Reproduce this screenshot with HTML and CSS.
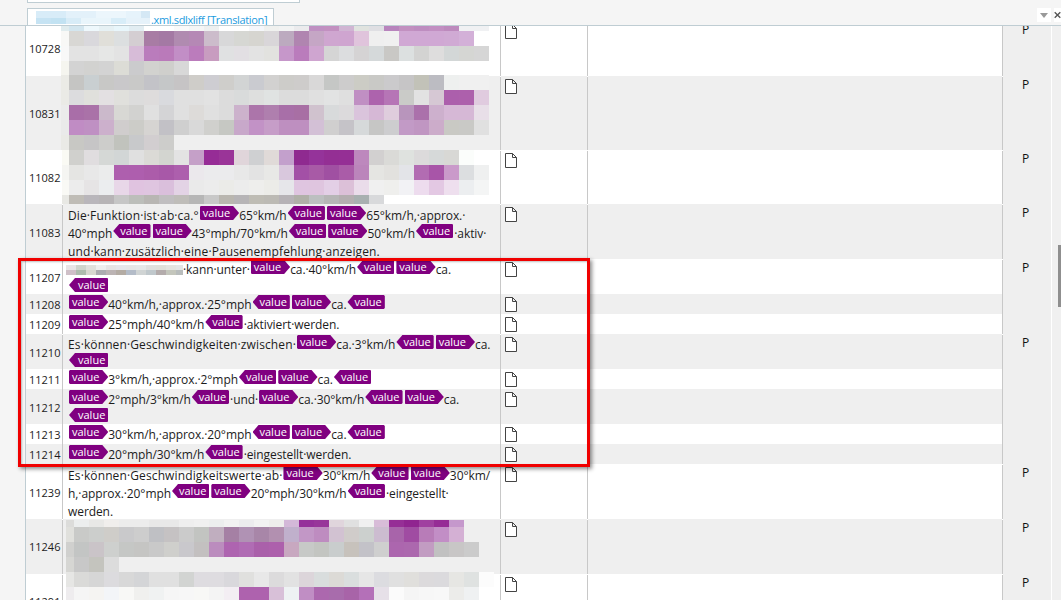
FILE: index.html
```html
<!DOCTYPE html>
<html lang="en">
  <head>
    <meta charset="UTF-8" />
    <title>Translation editor</title>
    <link rel="stylesheet" href="styles.css">
  </head>

  <body>
    <header class="tabbar">
      <div class="tab-top"></div>
      <div class="tab">
        <div class="mosaic tab-mosaic" data-mosaic="tab"></div>
        <span class="tab-name">.xml.sdlxliff [Translation]</span>
      </div>
      <div class="tab-tools">
        <span class="tool"><i class="arrow"></i></span>
        <span class="tool close">
          <svg width="10" height="10" viewBox="0 0 10 10"><path d="M1 1l8 8M9 1l-8 8" stroke="#555" stroke-width="2" fill="none"/></svg>
        </span>
      </div>
    </header>

    <main class="grid">
      <div class="rows">
        <div class="row white group first">
          <div class="num">10728</div>
          <div class="text"><div class="mosaic top" data-mosaic="a"></div></div>
          <div class="doc"><svg class="page" width="12" height="15" viewBox="0 0 12 15"><path d="M.5.5h7l4 4v10h-11zM7.5.5v4h4" fill="#fff" stroke="#444"/></svg></div>
          <div class="notes"></div>
          <div class="status">P</div>
        </div>

        <div class="row grey group tall">
          <div class="num">10831</div>
          <div class="text"><div class="mosaic top lift" data-mosaic="b"></div></div>
          <div class="doc"><svg class="page" width="12" height="15" viewBox="0 0 12 15"><path d="M.5.5h7l4 4v10h-11zM7.5.5v4h4" fill="#fff" stroke="#444"/></svg></div>
          <div class="notes"></div>
          <div class="status">P</div>
        </div>

        <div class="row white group r54">
          <div class="num">11082</div>
          <div class="text clip"><div class="mosaic top flush" data-mosaic="c"></div></div>
          <div class="doc"><svg class="page" width="12" height="15" viewBox="0 0 12 15"><path d="M.5.5h7l4 4v10h-11zM7.5.5v4h4" fill="#fff" stroke="#444"/></svg></div>
          <div class="notes"></div>
          <div class="status">P</div>
        </div>

        <div class="row grey group r3">
          <div class="num">11083</div>
          <div class="text">
            <div class="line"><span class="wide">Die·Funktion·ist·ab·ca.°</span><b class="s">value</b>65°km/h<b class="e">value</b><b class="s">value</b>65°km/h,·approx.·</div>
            <div class="line">40°mph<b class="e">value</b><b class="s">value</b>43°mph/70°km/h<b class="e">value</b><b class="s">value</b>50°km/h<b class="e">value</b>·aktiv·</div>
            <div class="line"><span class="wide">und·kann·zusätzlich·eine·Pausenempfehlung·anzeigen.</span></div>
          </div>
          <div class="doc"><svg class="page" width="12" height="15" viewBox="0 0 12 15"><path d="M.5.5h7l4 4v10h-11zM7.5.5v4h4" fill="#fff" stroke="#444"/></svg></div>
          <div class="notes"></div>
          <div class="status">P</div>
        </div>

        <div class="row white group r2">
          <div class="num">11207</div>
          <div class="text">
            <div class="line"><div class="mosaic small" data-mosaic="d"></div>·kann·unter·<b class="s">value</b>ca.·40°km/h<b class="e">value</b><b class="s">value</b>ca.</div>
            <div class="line"><b class="e solo">value</b></div>
          </div>
          <div class="doc"><svg class="page" width="12" height="15" viewBox="0 0 12 15"><path d="M.5.5h7l4 4v10h-11zM7.5.5v4h4" fill="#fff" stroke="#444"/></svg></div>
          <div class="notes"></div>
          <div class="status">P</div>
        </div>

        <div class="row grey r1">
          <div class="num">11208</div>
          <div class="text">
            <div class="line"><b class="s">value</b>40°km/h,·approx.·25°mph<b class="e">value</b><b class="s">value</b>ca.<b class="e">value</b></div>
          </div>
          <div class="doc"><svg class="page" width="12" height="15" viewBox="0 0 12 15"><path d="M.5.5h7l4 4v10h-11zM7.5.5v4h4" fill="#fff" stroke="#444"/></svg></div>
          <div class="notes"></div>
          <div class="status"></div>
        </div>

        <div class="row white r1">
          <div class="num">11209</div>
          <div class="text">
            <div class="line"><b class="s">value</b>25°mph/40°km/h<b class="e">value</b>·aktiviert·werden.</div>
          </div>
          <div class="doc"><svg class="page" width="12" height="15" viewBox="0 0 12 15"><path d="M.5.5h7l4 4v10h-11zM7.5.5v4h4" fill="#fff" stroke="#444"/></svg></div>
          <div class="notes"></div>
          <div class="status"></div>
        </div>

        <div class="row grey group r2">
          <div class="num">11210</div>
          <div class="text">
            <div class="line"><span class="wide">Es·können·Geschwindigkeiten·zwischen·</span><b class="s">value</b>ca.·3°km/h<b class="e">value</b><b class="s">value</b>ca.</div>
            <div class="line"><b class="e solo">value</b></div>
          </div>
          <div class="doc"><svg class="page" width="12" height="15" viewBox="0 0 12 15"><path d="M.5.5h7l4 4v10h-11zM7.5.5v4h4" fill="#fff" stroke="#444"/></svg></div>
          <div class="notes"></div>
          <div class="status">P</div>
        </div>

        <div class="row white r1">
          <div class="num">11211</div>
          <div class="text">
            <div class="line"><b class="s">value</b>3°km/h,·approx.·2°mph<b class="e">value</b><b class="s">value</b>ca.<b class="e">value</b></div>
          </div>
          <div class="doc"><svg class="page" width="12" height="15" viewBox="0 0 12 15"><path d="M.5.5h7l4 4v10h-11zM7.5.5v4h4" fill="#fff" stroke="#444"/></svg></div>
          <div class="notes"></div>
          <div class="status"></div>
        </div>

        <div class="row grey r2">
          <div class="num">11212</div>
          <div class="text">
            <div class="line"><b class="s">value</b>2°mph/3°km/h<b class="e">value</b>·und·<b class="s">value</b>ca.·30°km/h<b class="e">value</b><b class="s">value</b>ca.</div>
            <div class="line"><b class="e solo">value</b></div>
          </div>
          <div class="doc"><svg class="page" width="12" height="15" viewBox="0 0 12 15"><path d="M.5.5h7l4 4v10h-11zM7.5.5v4h4" fill="#fff" stroke="#444"/></svg></div>
          <div class="notes"></div>
          <div class="status"></div>
        </div>

        <div class="row white r1">
          <div class="num">11213</div>
          <div class="text">
            <div class="line"><b class="s">value</b>30°km/h,·approx.·20°mph<b class="e">value</b><b class="s">value</b>ca.<b class="e">value</b></div>
          </div>
          <div class="doc"><svg class="page" width="12" height="15" viewBox="0 0 12 15"><path d="M.5.5h7l4 4v10h-11zM7.5.5v4h4" fill="#fff" stroke="#444"/></svg></div>
          <div class="notes"></div>
          <div class="status"></div>
        </div>

        <div class="row grey r1">
          <div class="num">11214</div>
          <div class="text">
            <div class="line"><b class="s">value</b>20°mph/30°km/h<b class="e">value</b>·eingestellt·werden.</div>
          </div>
          <div class="doc"><svg class="page" width="12" height="15" viewBox="0 0 12 15"><path d="M.5.5h7l4 4v10h-11zM7.5.5v4h4" fill="#fff" stroke="#444"/></svg></div>
          <div class="notes"></div>
          <div class="status"></div>
        </div>

        <div class="row white group r3">
          <div class="num">11239</div>
          <div class="text">
            <div class="line"><span class="wide">Es·können·Geschwindigkeitswerte·ab·</span><b class="s">value</b>30°km/h<b class="e">value</b><b class="s">value</b>30°km/</div>
            <div class="line">h,·approx.·20°mph<b class="e">value</b><b class="s">value</b>20°mph/30°km/h<b class="e">value</b>·eingestellt·</div>
            <div class="line">werden.</div>
          </div>
          <div class="doc"><svg class="page" width="12" height="15" viewBox="0 0 12 15"><path d="M.5.5h7l4 4v10h-11zM7.5.5v4h4" fill="#fff" stroke="#444"/></svg></div>
          <div class="notes"></div>
          <div class="status">P</div>
        </div>

        <div class="row grey group r3">
          <div class="num">11246</div>
          <div class="text"><div class="mosaic bottom" data-mosaic="e"></div></div>
          <div class="doc"><svg class="page" width="12" height="15" viewBox="0 0 12 15"><path d="M.5.5h7l4 4v10h-11zM7.5.5v4h4" fill="#fff" stroke="#444"/></svg></div>
          <div class="notes"></div>
          <div class="status">P</div>
        </div>

        <div class="row white group r3">
          <div class="num">11291</div>
          <div class="text"><div class="mosaic bottom lift2" data-mosaic="f"></div></div>
          <div class="doc"><svg class="page" width="12" height="15" viewBox="0 0 12 15"><path d="M.5.5h7l4 4v10h-11zM7.5.5v4h4" fill="#fff" stroke="#444"/></svg></div>
          <div class="notes"></div>
          <div class="status">P</div>
        </div>
      </div>

      <div class="scrollbar"><div class="thumb"></div></div>
    </main>

    <div class="callout"></div>

    <script src="mosaic.js"></script>
  </body>
</html>
```

FILE: styles.css
```css
html,
body {
  margin: 0;
  padding: 0;
  height: 600px;
  overflow: hidden;
  background-color: #f5f5f5;
  font-family: "Open Sans", "Noto Sans", sans-serif;
  font-size: 12px;
  color: #1c1c1c;
}

/* tab strip */
.tabbar {
  position: relative;
  height: 25px;
  background-color: #f5f5f5;
  border-bottom: 1px solid #bfcdd3;
  overflow: hidden;
}

.tab-top {
  width: 273px;
  height: 3px;
  margin-left: 27px;
  border: 1px solid #bfcdd3;
  border-top: none;
  box-sizing: border-box;
  background-color: #fff;
}

.tab {
  display: flex;
  width: 247px;
  height: 22px;
  margin: 5px 0 0 27px;
  padding: 1px 0 0 8px;
  box-sizing: border-box;
  border: 1px solid #bfcdd3;
  background-color: #fff;
}

.tab-name {
  margin: 2px 0 0 1px;
  font-size: 11px;
  letter-spacing: -0.35px;
  line-height: 15px;
  white-space: nowrap;
  color: #1d9ce0;
}

.tab-tools {
  position: absolute;
  top: 8px;
  right: 0;
  display: flex;
  gap: 3px;
}

.tool {
  display: flex;
  align-items: center;
  justify-content: center;
  width: 14px;
  height: 14px;
  background-color: #fff;
}

.tool.close {
  width: 7px;
  justify-content: flex-start;
  overflow: hidden;
}

.arrow {
  width: 0;
  height: 0;
  border: 4px solid transparent;
  border-top: 5px solid #999;
  border-bottom: none;
}

/* main table */
.grid {
  display: flex;
  height: 574px;
  margin-left: 25px;
  border-left: 1px solid #bfcdd3;
  overflow: hidden;
}

.rows {
  width: 1025px;
  margin-top: -5px;
}

.row {
  display: grid;
  grid-template-columns: 36px 438px 87px 415px 49px;
}

.white {
  background-color: #fff;
}

.grey {
  background-color: #efefef;
}

.r1 { height: 20px; }
.r2 { height: 35px; }
.r3 { height: 55px; }
.r54 { height: 54px; }
.tall { height: 74px; }
.first { height: 55px; }

.num {
  display: flex;
  align-items: center;
  padding-left: 3px;
  font-size: 11px;
}

.text,
.doc,
.notes,
.status {
  background: linear-gradient(#c8c8c8, #c8c8c8) 0 0 / 1px 100% no-repeat;
}

.group .text,
.group .doc,
.group .notes,
.group .status {
  background:
    linear-gradient(#c8c8c8, #c8c8c8) 0 1px / 1px 100% no-repeat,
    linear-gradient(#fff, #fff) 0 0 / 1px 1px no-repeat;
}

.text {
  position: relative;
  padding: 1px 0 0 6px;
}

.clip {
  overflow: hidden;
}

.line {
  display: flex;
  height: 18px;
  line-height: 20px;
  letter-spacing: -0.08px;
  white-space: nowrap;
}

.r3 .line:first-child {
  margin-top: 1px;
}

.wide {
  letter-spacing: 0.12px;
}

.doc {
  padding: 3px 0 0 5px;
}

.page {
  display: block;
}

.status,
.group .status,
.row.white .status {
  padding-top: 2px;
  padding-left: 20px;
  line-height: 14px;
  font-weight: 500;
  background-color: #efefef;
  color: #111;
}

/* placeholders */
.s,
.e {
  flex: none;
  height: 14px;
  font-size: 11px;
  font-weight: normal;
  line-height: 13px;
  letter-spacing: 0;
  color: #fff;
  background-color: #800080;
}

.s {
  margin: 0 0 0 1px;
  padding: 0 9px 0 3px;
  clip-path: polygon(1px 0, calc(100% - 6px) 0, 100% 50%, calc(100% - 6px) 100%, 1px 100%, 0 calc(100% - 1px), 0 1px);
}

.e {
  margin: 0 1px;
  padding: 0 3px 0 7px;
  clip-path: polygon(6px 0, calc(100% - 1px) 0, 100% 1px, 100% calc(100% - 1px), calc(100% - 1px) 100%, 6px 100%, 0 50%);
}

.solo {
  padding-left: 9px;
}

/* blurred source text */
.mosaic {
  position: relative;
}

.top {
  margin-left: -7px;
}

.lift {
  margin-top: -2px;
}

.flush {
  margin-top: -1px;
}

.bottom {
  margin-left: -2px;
}

.lift2 {
  margin-top: -3px;
}

.small {
  width: 117px;
  margin: 5px 0 0 -2px;
  overflow: hidden;
}

.tab-mosaic {
  flex: none;
  width: 114px;
  margin-top: 1px;
  overflow: hidden;
}

.m-row {
  display: flex;
}

.m-cell {
  flex: none;
  width: 15px;
}

.m-lead {
  width: 8px;
}

.small .m-cell {
  width: 10px;
}

/* scrollbar */
.scrollbar {
  flex: 1;
  position: relative;
  background-color: #f0f0f0;
  border-left: 1px solid #fff;
}

.thumb {
  position: absolute;
  top: 219px;
  right: 0;
  width: 3px;
  height: 62px;
  background-color: #8f8f8f;
}

/* red review box drawn over the table */
.callout {
  position: absolute;
  top: 258px;
  left: 18px;
  width: 566px;
  height: 203px;
  border: 3px solid #f00000;
  box-shadow: 2px 2px 4px rgba(0, 0, 0, 0.45), inset 1px 1px 2px rgba(0, 0, 0, 0.25);
}
```

FILE: mosaic.js
```js
// colours of the pixelated blocks, each row is [height, lead cell, cells...]
const mosaics = {
  tab: [
    [7, null, "#d8ecf8", "#d8ecf8", "#e3f1fa", "#e3f1fa", "#ecf6fc", "#ecf6fc", "#e6f3fb", "#d5e8f5"],
    [6, null, "#c6e3f3", "#c2e2f2", "#d8ecf7", "#e9f5fb", "#e9f5fb", "#d8edf8", "#e6f2fa", "#e6f2fa"],
  ],
  a: [
    [9, "#e0ecee", "#d3e6ef", "#eef8fc", "#e6f1f4", "#e8f6fb", "#e2edf2", "#fff", "#fff", "#fafafa", "#f5f6f6", "#eef0f0", "#fff", "#fff", "#f5f7fb", "#f0f1ef", "#f2f3f3", "#ebebed", "#bf90c2", "#c290c0", "#d0b5d3", "#e0e3df", "#dfdfe3", "#b884bd", "#c290c0", "#be8dc0", "#c28fc2", "#bd8abd", "#f0f1f3", "#f0f1f3"],
    [15, "#f8f8f6", "#d8d7d4", "#d9d8dc", "#e0dfd9", "#dcdfe0", "#d4ced2", "#a87ca4", "#a479a4", "#b08bb0", "#b588b5", "#ccbccb", "#d8d8d9", "#d6d7d3", "#d6d5d0", "#d9d6d9", "#bcaabf", "#b085b0", "#c5a6c5", "#cfa6d0", "#cfa5d0", "#e0c4dc", "#efefef", "#f0f0f0", "#d0a8d4", "#d0a8d4", "#d0a8d4", "#d0aad4", "#d3b0d8", "#fff"],
    [15, "#f8f8f8", "#e3e3e3", "#e3e3e3", "#e6e7e6", "#e3e3e3", "#d7bcd8", "#ba7cbc", "#ba7aba", "#c28ec6", "#bb7cbc", "#c89cc0", "#e0e1e2", "#e2dfe3", "#e3e3e3", "#e2e2df", "#c697ca", "#ba7cbc", "#cfa5d0", "#d5d5d5", "#dcdddf", "#d5d3d4", "#d5d9da", "#c9c8c5", "#dce0e0", "#d3d3d2", "#dedddd", "#d3d7d7", "#d5d6d3", "#d6d6d6"],
    [15, "#f5f5ef", "#d3d3d3", "#d2d2d0", "#d3d3d3", "#dcdcd6", "#cbcbcd", "#d2d2cf", "#cfcfcc", "#d8d8d8"],
  ],
  b: [
    [15, "#ebebe6", "#c5c5c3", "#c9cfd1", "#c8c8c6", "#c9c8ca", "#c9c9c8", "#c3c3c8", "#c5c7c8", "#c6c4c5", "#cfcdc9", "#cecdd2", "#cfcecb", "#d2d4d4", "#cacbd0", "#d2d1d0", "#cdccc9", "#cecccb", "#d9d8d8", "#c5c7c5", "#cdcccc", "#ccccc5", "#c9c9c6", "#cbcacc", "#c6c5c6", "#c2c2b8", "#bcbcc2", "#eef0ef", "#f0f0f0", "#f0f0f0"],
    [15, "#eaeae6", "#dcdcde", "#e0e0dc", "#e3e0e2", "#e0e0dc", "#dcdcdc", "#dedcdc", "#d9dade", "#e0e0e0", "#e0e0e0", "#e2e2e2", "#dcdcdc", "#d9dbdb", "#dedfde", "#e0e3e2", "#dcdcdc", "#dcdcdc", "#e0e0e0", "#e2e3e3", "#dfdfdf", "#c08fc3", "#ad63ad", "#b675b6", "#cacbc8", "#e2e2e2", "#d6c8d4", "#ac5fac", "#ad60ac", "#e0cbdf"],
    [15, "#ebebeb", "#a96ea8", "#aa72a8", "#cbb9cb", "#d8d8d4", "#d2d2d0", "#e0e0e0", "#d4d4d6", "#e0e0e0", "#dddbd9", "#e0e0e0", "#dcdcdc", "#ccb2cc", "#ac75aa", "#af7fae", "#a86fa8", "#a86fa4", "#d0c2ce", "#d8dadb", "#dcdadc", "#dac4dc", "#d6b8d6", "#dfcddd", "#b895bc", "#ab71ab", "#cdb0cd", "#d6b8d6", "#d6b8d6", "#e8dfe8"],
    [15, "#eaeaea", "#c08cc4", "#bf90c3", "#ccb0cc", "#d0cdcd", "#ccccc8", "#d6d4d2", "#c2c1c6", "#cfcfcf", "#d9d9d9", "#d0d0cd", "#c6c8c3", "#c8a8ca", "#c292c6", "#c69dc8", "#be8fc0", "#be8fc0", "#d3c0d6", "#d0cfcf", "#c5c3c8", "#d6d9da", "#c6c6c5", "#cdcdcf", "#c29ac6", "#c096c2", "#ccacca", "#c9c9c4", "#c9c9c6", "#e0e0e0"],
    [15, "#eaeae6", "#c8c8c4", "#c6c5c6", "#cdcdcb", "#c1c3bd", "#c8c9cb", "#d2ced0", "#cdcdcb"],
  ],
  c: [
    [15, "#fafaf4", "#d0d0cd", "#e0dddf", "#d5d8d6", "#d2d6d6", "#e0e0e0", "#dbdad6", "#d3d5d0", "#e3e3e3", "#c5a0c8", "#962c96", "#9a3498", "#e0d5da", "#cfd0d2", "#e0dad8", "#c3a0cc", "#8f2a90", "#95339a", "#942f94", "#952f95", "#bd88bd", "#d2d0d0", "#dadad7", "#dfe2df", "#dcdadb", "#d6d9d9", "#d8d8d5", "#fbfdfb", "#fff"],
    [15, "#f5f5f2", "#e5e5e3", "#e8e8e8", "#ebecec", "#ae5fae", "#ae5eae", "#ac5caa", "#a858a8", "#ad5fad", "#ebe8ec", "#ebebed", "#ebebed", "#e8e8e8", "#e3e3e3", "#e8e8e6", "#d9c8dd", "#a350a6", "#a85aa6", "#a050a2", "#aa5ca8", "#bb85bb", "#e5e5e2", "#e2e1de", "#e3e4e8", "#b26cb2", "#a855a8", "#ca9aca", "#dcdee0", "#eff0f0"],
    [15, "#f9f9f5", "#ececec", "#e6e4e5", "#ebedef", "#e8d7e8", "#e0c3e0", "#dfc5e0", "#dabfdc", "#e3d3e5", "#eaeaea", "#ececec", "#ebebe8", "#ececec", "#eeeeec", "#ecece8", "#e6e6ea", "#dfc5e0", "#dfc5df", "#e3cfe6", "#dcc0d8", "#eadcea", "#f0f0f0", "#efefed", "#f2f2f5", "#eddcee", "#e3c8e3", "#eedfee", "#eceef0", "#f4f5f5"],
    [10, "#e8e8e4", "#bfbcb6", "#b9b6bb", "#b7b4b6", "#c6c6c6", "#bcbeba", "#b8b6b3", "#c0bec0", "#bfbdb9", "#b6b6b6", "#c8c8c8", "#b9b6af", "#b6b4b6", "#bebcb4", "#bcbab4", "#b6b2b6", "#b0b0a8", "#bcbfc0", "#b6b6b6", "#b4aeb0", "#a8b0b0", "#d8d9db"],
  ],
  d: [
    [5, null, "#e8e4e6", "#cfd4cc", "#e0e0dc", "#eeeeee", "#e6e4e4", "#e6e6ea", "#e6e6e6", "#e6e8e8", "#e0e0de", "#e0e0da", "#e4e4e0", "#e4e6e6"],
    [5, null, "#cfc0c8", "#aebcae", "#d8d8d0", "#acacb0", "#bcb4b4", "#b4aca4", "#b4bcc8", "#d0d4d4", "#c0c8cc", "#b4acac", "#c4c6bc", "#b8bcbc"],
  ],
  e: [
    [7, "#dcdcda", "#eceeee", "#e8e8e6", "#f0eeec", "#ececec", "#ececec", "#e8e8e8", "#e8e8e8", "#eeeeee", "#f0f0f0", "#eceeee", "#f2f2f2", "#ececee", "#f2f2f2", "#eeeeec", "#d3b8d8", "#95309a", "#98359a", "#e0d5dc", "#e0e0e0", "#f0f0f0", "#d8bcd8", "#962e96", "#902490", "#a040a0", "#962c96", "#c598cc"],
    [15, "#e0e0dc", "#c9cac8", "#cccecc", "#cfcdc9", "#c9c9cb", "#cdcdcd", "#bfc0c4", "#c5c2c3", "#cbcbcb", "#c2c4c1", "#c0aebf", "#a580a4", "#b092b4", "#a886a8", "#b290b0", "#c0b0cc", "#c297c6", "#be8cc0", "#d2c2d2", "#d0ccca", "#ccd0ce", "#ccbcd0", "#a864aa", "#a04ca2", "#b87cb8", "#c28ec6", "#d4b0d4"],
    [15, "#d0d0ce", "#c3c5c4", "#cac4c8", "#ced0ce", "#c5c7c5", "#c5c5c3", "#c9c9c9", "#cfcfcc", "#c9c8cc", "#c3c0c0", "#bb8cbe", "#ae64b0", "#b06cb4", "#aa60aa", "#ad60ac", "#c8a8c0", "#c7c9c7", "#c3c5c1", "#c9cdcd", "#c7c2bc", "#c3c2c8", "#cfcfcf", "#ac66ae", "#ac68ae", "#c29cc2", "#c1c1c1", "#c8c6c6", "#cbcbcb"],
    [15, "#d6d6d3", "#c8c8c8", "#c4c4be", "#dcdcdc"],
  ],
  f: [
    [15, "#e6e6e4", "#dadad8", "#d6d6d6", "#dcdbde", "#d8d8d8", "#d4d5d7", "#e0e0e0", "#e0e0e0", "#d2d4d2", "#dedce0", "#dedce0", "#d9d8dc", "#e0e0de", "#e8e8e8", "#dcdbdc", "#e2e2e2", "#dcd5da", "#d9dddd", "#dcdad6", "#dadede", "#e6e6e6", "#dcdce0", "#e0e0e0", "#e0dfdc", "#dcdadc", "#dbdadd", "#e6e6e3", "#dfe2e1", "#fcfcfc"],
    [15, "#eeecee", "#f5f5f5", "#f5f4f2", "#f3f5f8", "#f8f8f6", "#f0f0ee", "#f0f2f2", "#f6f6f6", "#f7f7f7", "#f8f8f6", "#f4f4f4", "#f3eef3", "#ae62ae", "#ae62ae", "#d8c0d8", "#eef2f3", "#c08ec4", "#ac68ae", "#a86cac", "#a864a8", "#b470b8", "#e6e0e8", "#fbfbfb", "#f5f5f5", "#f7f7f7", "#f8f8f8", "#ececea", "#eff1f2"],
  ],
};

document.querySelectorAll("[data-mosaic]").forEach(box => {
  mosaics[box.dataset.mosaic].forEach(([height, lead, ...cells]) => {
    const row = document.createElement("div");
    row.className = "m-row";
    row.style.height = height + "px";

    if (lead) {
      const first = document.createElement("div");
      first.className = "m-cell m-lead";
      first.style.backgroundColor = lead;
      row.appendChild(first);
    }

    cells.forEach(colour => {
      const cell = document.createElement("div");
      cell.className = "m-cell";
      cell.style.backgroundColor = colour;
      row.appendChild(cell);
    });

    box.appendChild(row);
  });
});
```
